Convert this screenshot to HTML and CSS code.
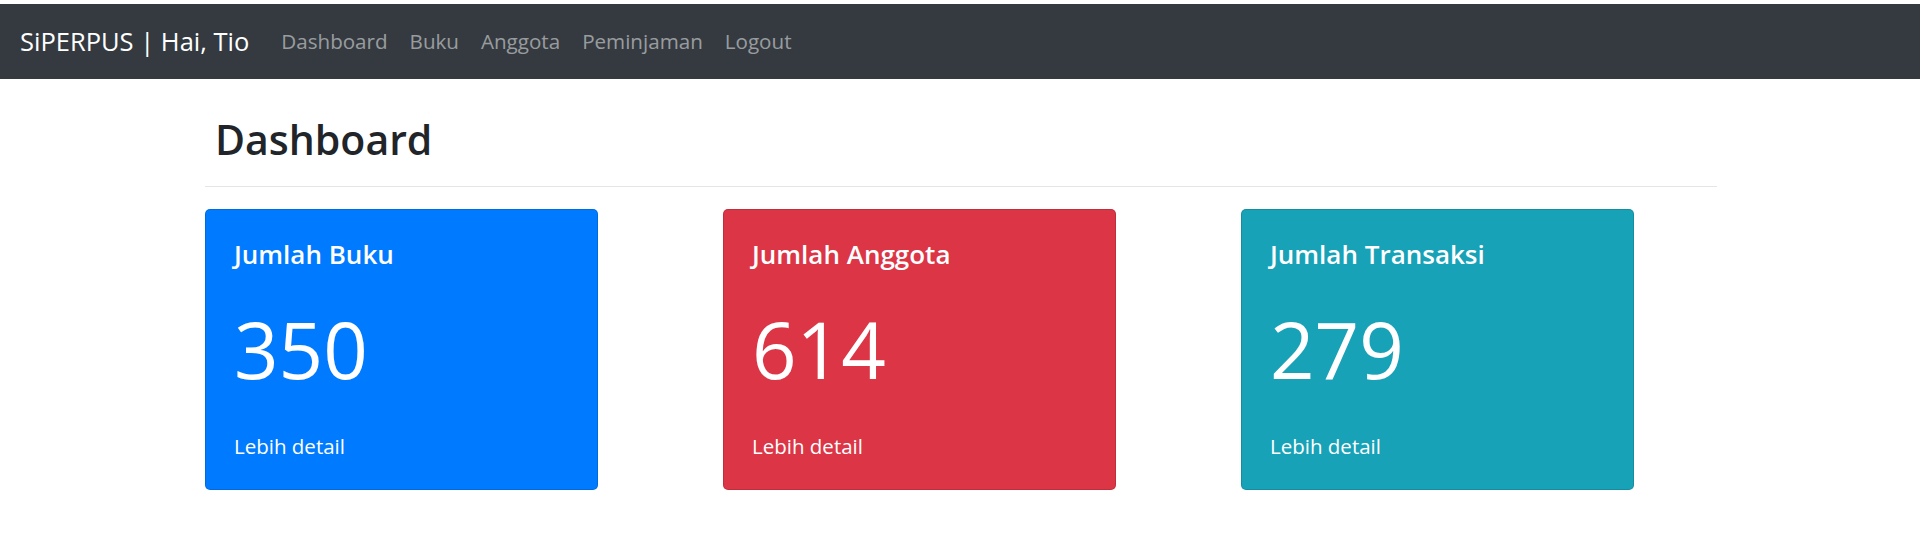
FILE: index.html
```html
<!DOCTYPE html>
<html lang="id">
<head>
<meta charset="utf-8">
<title>SiPERPUS | Dashboard</title>
<link rel="stylesheet" href="styles.css">
</head>
<body>
<nav class="navbar">
  <a class="brand" href="#">SiPERPUS | Hai, Tio</a>
  <ul class="nav">
    <li><a class="nav-link" href="#">Dashboard</a></li>
    <li><a class="nav-link" href="#">Buku</a></li>
    <li><a class="nav-link" href="#">Anggota</a></li>
    <li><a class="nav-link" href="#">Peminjaman</a></li>
    <li><a class="nav-link" href="#">Logout</a></li>
  </ul>
</nav>
<main class="container">
  <h1 class="page-title">Dashboard</h1>
  <hr class="divider">
  <div class="cards">
    <div class="card card-blue">
      <h5 class="card-title">Jumlah Buku</h5>
      <div class="card-number">350</div>
      <a class="card-link" href="#">Lebih detail</a>
    </div>
    <div class="card card-red">
      <h5 class="card-title">Jumlah Anggota</h5>
      <div class="card-number">614</div>
      <a class="card-link" href="#">Lebih detail</a>
    </div>
    <div class="card card-teal">
      <h5 class="card-title">Jumlah Transaksi</h5>
      <div class="card-number">279</div>
      <a class="card-link" href="#">Lebih detail</a>
    </div>
  </div>
</main>
</body>
</html>
```

FILE: styles.css
```css
* { box-sizing: border-box; }

html, body {
  margin: 0;
  padding: 0;
  background: #fff;
}

body {
  font-family: "Open Sans", "Noto Sans", "Liberation Sans", sans-serif;
  color: #212529;
  padding-top: 4px;
}

a { text-decoration: none; }

.navbar {
  height: 75px;
  background: #343a40;
  display: flex;
  align-items: center;
  padding: 0 20px;
}

.brand {
  color: #fff;
  font-size: 25.5px;
  line-height: 1.5;
  margin-right: 21px;
}

.nav {
  list-style: none;
  margin: 0;
  padding: 0;
  display: flex;
}

.nav-link {
  display: block;
  color: rgba(255, 255, 255, 0.5);
  font-size: 20.6px;
  line-height: 1.5;
  padding: 0 11px;
}

.container {
  width: 1512px;
  margin-left: 205px;
}

.page-title {
  font-size: 41px;
  font-weight: 600;
  line-height: 1.2;
  margin: 36px 0 0;
  padding-left: 10px;
}

.divider {
  border: 0;
  border-top: 1px solid rgba(0, 0, 0, 0.1);
  margin: 22px 0 22px;
}

.cards {
  display: grid;
  grid-template-columns: repeat(3, 393px);
  column-gap: 125px;
}

.card {
  height: 281px;
  border: 1px solid rgba(0, 0, 0, 0.125);
  border-radius: 5px;
  color: #fff;
  padding: 29px 26px 27px 28px;
  display: flex;
  flex-direction: column;
}

.card-blue { background: #007bff; }
.card-red { background: #dc3545; }
.card-teal { background: #17a2b8; }

.card-title {
  font-size: 26px;
  font-weight: 600;
  line-height: 1.2;
  margin: 0;
}

.card-number {
  font-size: 78px;
  font-weight: 400;
  line-height: 1.2;
  margin-top: 33px;
}

.card-link {
  color: #fff;
  font-size: 20.5px;
  line-height: 1.5;
  margin-top: auto;
}
```
